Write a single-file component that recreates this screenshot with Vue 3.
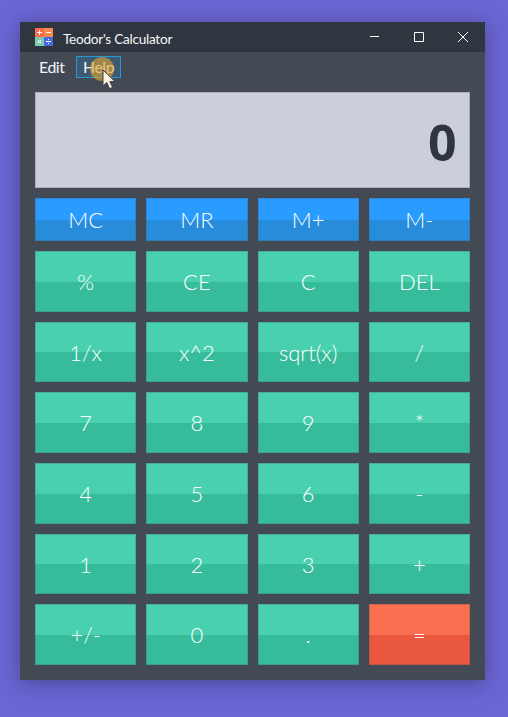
<script setup>
import { ref } from 'vue'

const display = ref('0')
const memoryKeys = ['MC', 'MR', 'M+', 'M-']
const keys = [
  '%', 'CE', 'C', 'DEL',
  '1/x', 'x^2', 'sqrt(x)', '/',
  '7', '8', '9', '*',
  '4', '5', '6', '-',
  '1', '2', '3', '+',
  '+/-', '0', '.', '=',
]
</script>

<template>
  <div class="desktop">
    <main class="window">
      <header class="titlebar">
        <svg class="logo" width="18" height="18" viewBox="0 0 18 18">
          <rect width="9" height="9" fill="#fb6a4c" />
          <rect x="9" width="9" height="9" fill="#f68c4b" />
          <rect y="9" width="9" height="9" fill="#7bcbb3" />
          <rect x="9" y="9" width="9" height="9" fill="#4869e4" />
          <g stroke="#fff" stroke-width="1" fill="none">
            <path d="M2 4.5h5M4.5 2v5M11 4.5h5M3 12l3 3M6 12l-3 3M11 13.5h5" />
          </g>
          <path d="M13 11h1v1h-1zM13 15h1v1h-1z" fill="#fff" />
        </svg>
        <span class="title">Teodor's Calculator</span>
        <div class="controls">
          <svg width="44" height="30" viewBox="0 0 44 30"><path d="M15 14.5h9" /></svg>
          <svg width="44" height="30" viewBox="0 0 44 30"><path d="M15.5 10.5h9v9h-9z" /></svg>
          <svg width="44" height="30" viewBox="0 0 44 30"><path d="M15 10l10 10M25 10L15 20" /></svg>
        </div>
      </header>

      <nav class="menu">
        <span class="item">Edit</span>
        <span class="item active">
          <span class="label">Help</span>
          <span class="halo"></span>
          <svg class="cursor" width="14" height="21" viewBox="0 0 14 21">
            <path d="M1 1v16l3.8-3.5 2.8 6.2 3-1.3-2.8-5.9H13z" />
          </svg>
        </span>
      </nav>

      <section class="body">
        <output class="display">{{ display }}</output>
        <div class="memory">
          <button v-for="k in memoryKeys" :key="k" class="key blue">{{ k }}</button>
        </div>
        <div class="pad">
          <button v-for="k in keys" :key="k" class="key" :class="{ equals: k === '=' }">{{ k }}</button>
        </div>
      </section>
    </main>
  </div>
</template>

<style>
body {
  background: #6b67d5;
}
</style>

<style scoped>
.desktop {
  box-sizing: border-box;
  width: 508px;
  height: 717px;
  padding: 22px 23px 37px 20px;
  background: #6b67d5;
  overflow: hidden;
}
.window {
  display: flex;
  flex-direction: column;
  height: 658px;
  background: #444a54;
  box-shadow: 0 3px 20px rgba(40, 35, 80, 0.5);
}
.titlebar {
  display: flex;
  align-items: center;
  height: 30px;
  padding-left: 15px;
  background: #2f3640;
}
.logo {
  display: block;
}
.title {
  margin-left: 10px;
  padding-top: 4px;
  color: #f5f6fa;
  font: 13.6px/18px Lato, sans-serif;
  letter-spacing: -0.26px;
  white-space: nowrap;
}
.controls {
  display: flex;
  margin-left: auto;
  margin-right: -2px;
}
.controls svg {
  display: block;
  fill: none;
  stroke: #fff;
  stroke-width: 1;
}
.menu {
  display: flex;
  gap: 4px;
  height: 40px;
  padding: 4px 12px 0;
  box-sizing: border-box;
}
.item {
  position: relative;
  box-sizing: border-box;
  width: 40px;
  height: 22px;
  padding: 0 6px;
  border: 1px solid transparent;
  color: #f5f6fa;
  font: 15.8px/20px Lato, sans-serif;
  letter-spacing: -0.4px;
}
.item.active {
  width: 45px;
  border-color: #2897da;
  background: #3d5a73;
}
.halo {
  position: absolute;
  left: 13px;
  top: 0;
  width: 24px;
  height: 24px;
  border-radius: 50%;
  background: rgba(225, 165, 45, 0.6);
}
.cursor {
  position: absolute;
  left: 25px;
  top: 12px;
  fill: #fbf4dc;
  stroke: #39404a;
  stroke-width: 1;
}
.body {
  display: flex;
  flex-direction: column;
  gap: 10px;
  padding: 0 15px 15px;
  flex: 1;
}
.display {
  display: block;
  box-sizing: border-box;
  height: 96px;
  padding-right: 12.5px;
  border: 1px solid #abadb3;
  background: #cacfd9;
  color: #2f3640;
  font: bold 50px/98px "Open Sans", sans-serif;
  text-align: right;
}
.memory,
.pad {
  display: grid;
  grid-template-columns: repeat(4, 1fr);
  gap: 10px;
}
.memory {
  height: 43px;
}
.pad {
  flex: 1;
  grid-template-rows: repeat(6, 1fr);
}
.key {
  min-width: 0;
  padding: 1.4px 0 0;
  border: 1px solid rgba(68, 74, 84, 0.25);
  background: linear-gradient(#49d0af 50%, #37bc9b 50%) border-box;
  color: #fff;
  font: 300 22px/26px Lato, sans-serif;
}
.key.blue {
  padding-top: 0;
  background: linear-gradient(#2a9bff 51%, #278dda 51%) border-box;
}
.key.equals {
  background: linear-gradient(#fb6f51 50%, #e9573e 50%) border-box;
}
</style>
